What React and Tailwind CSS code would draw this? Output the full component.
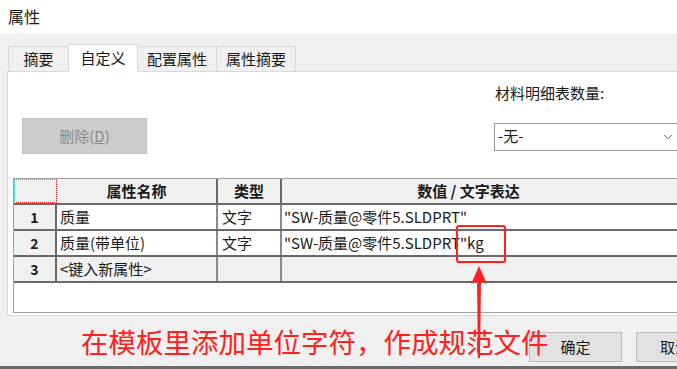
import { ChevronDown } from 'lucide-react';

const FONT = { fontFamily: '"Microsoft YaHei", "Noto Sans CJK SC", "Noto Sans", sans-serif' };

const TABS = [
  { label: '摘要', w: 'w-[61px]' },
  { label: '自定义', w: 'w-[70px]', active: true },
  { label: '配置属性', w: 'w-[80px]' },
  { label: '属性摘要', w: 'w-[80px]' },
];

const ROWS = [
  { n: '1', name: '质量', type: '文字', value: '"SW-质量@零件5.SLDPRT"' },
  { n: '2', name: '质量(带单位)', type: '文字', value: '"SW-质量@零件5.SLDPRT"kg' },
  { n: '3', name: '<键入新属性>', type: '', value: '', fresh: true },
];

export default function App() {
  return (
    <div className="relative w-[677px] h-[369px] overflow-hidden bg-[#f0f0f0] text-[#1a1a1a]" style={FONT}>
      {/* 标题栏 */}
      <div className="h-[33px] bg-white pl-[8px] pt-[4px] text-[16px]">属性</div>

      {/* 标签页 */}
      <div className="h-[39px] pl-[8px] flex items-end">
        {TABS.map(t => (
          <div key={t.label}
            className={`${t.w} flex items-center justify-center text-[15px] border border-[#d9d9d9] -ml-px first:ml-0
              ${t.active ? 'h-[28px] bg-white border-b-white relative z-10' : 'h-[25px] bg-[#f0f0f0] border-b-0 mb-px'}`}>
            {t.label}
          </div>
        ))}
      </div>

      {/* 面板 */}
      <div className="ml-[7px] h-[245px] bg-white border border-r-0 border-[#d9d9d9] -mt-px flex flex-col">
        <div className="h-[106px] flex">
          <div className="pl-[14px] pt-[46px]">
            <div className="w-[125px] h-[36px] bg-[#cccccc] border border-[#bfbfbf] flex items-center justify-center text-[15px] text-[#8a8a8a]">
              删除(<span className="underline">D</span>)
            </div>
          </div>
          <div className="ml-auto w-[183px] pt-[10px]">
            <div className="text-[15px] pl-[1px]">材料明细表数量:</div>
            <div className="mt-[18px] h-[28px] border border-r-0 border-[#9a9a9a] flex items-center pl-[3px] pr-[2px] text-[15px]">
              <span>-无-</span>
              <ChevronDown size={14} strokeWidth={1.5} className="ml-auto text-[#444]" />
            </div>
          </div>
        </div>

        {/* 属性表 */}
        <div className="ml-[5px] h-[135px] border border-r-0 border-[#a0a0a0] bg-white">
          <div className="flex h-[26px] bg-[#f0f0f0] border-b-2 border-[#6a6a6a] text-[15px] font-bold">
            <div className="w-[43px] border border-dotted border-[#1ec8c8] border-b-[#e02020] border-r-[#e02020]" />
            <div className="w-[161px] border-r-2 border-[#6a6a6a] flex items-center justify-center">属性名称</div>
            <div className="w-[64px] border-r-2 border-[#6a6a6a] flex items-center justify-center">类型</div>
            <div className="flex-1 flex items-center justify-center pr-[22px]">数值 / 文字表达</div>
          </div>
          {ROWS.map(r => (
            <div key={r.n} className={`flex h-[26px] border-b-2 border-[#6a6a6a] text-[15px] ${r.fresh ? 'bg-[#f0f0f0]' : 'bg-white'}`}>
              <div className="w-[43px] bg-[#f0f0f0] border-r-2 border-[#6a6a6a] flex items-center justify-center font-bold text-[14px]">{r.n}</div>
              <div className="w-[161px] border-r-2 border-[#8a8a8a] flex items-center pl-[3px]">{r.name}</div>
              <div className="w-[64px] border-r-2 border-[#8a8a8a] flex items-center pl-[4px]">{r.type}</div>
              <div className="flex-1 flex items-center pl-[2px]">{r.value}</div>
            </div>
          ))}
        </div>
      </div>

      {/* 底部按钮 */}
      <div className="flex justify-end gap-[14px] pt-[16px] -mr-[52px]">
        <div className="w-[93px] h-[30px] border border-[#bdbdbd] bg-[#e1e1e1] flex items-center justify-center text-[15px]">确定</div>
        <div className="w-[93px] h-[30px] border border-[#bdbdbd] bg-[#e1e1e1] flex items-center pl-[23px] text-[15px]">取消</div>
      </div>
      <div className="absolute left-0 right-0 bottom-0 h-[3px] bg-[#6a6a6a]" />

      {/* 标注 */}
      <div className="absolute left-[456px] top-[225px] w-[50px] h-[38px] border-2 border-[#ff2020] rounded-[3px]" />
      <svg className="absolute left-[470px] top-[266px]" width="18" height="92" viewBox="0 0 18 92">
        <path d="M9 0 L17 18 L11 15 L10 92 L8 92 L7 15 L1 18 Z" fill="#ff2020" />
      </svg>
      <div className="absolute left-[81px] top-[323px] text-[27.5px] leading-[36px] text-[#ff2020] whitespace-nowrap">
        在模板里添加单位字符，作成规范文件
      </div>
    </div>
  );
}
